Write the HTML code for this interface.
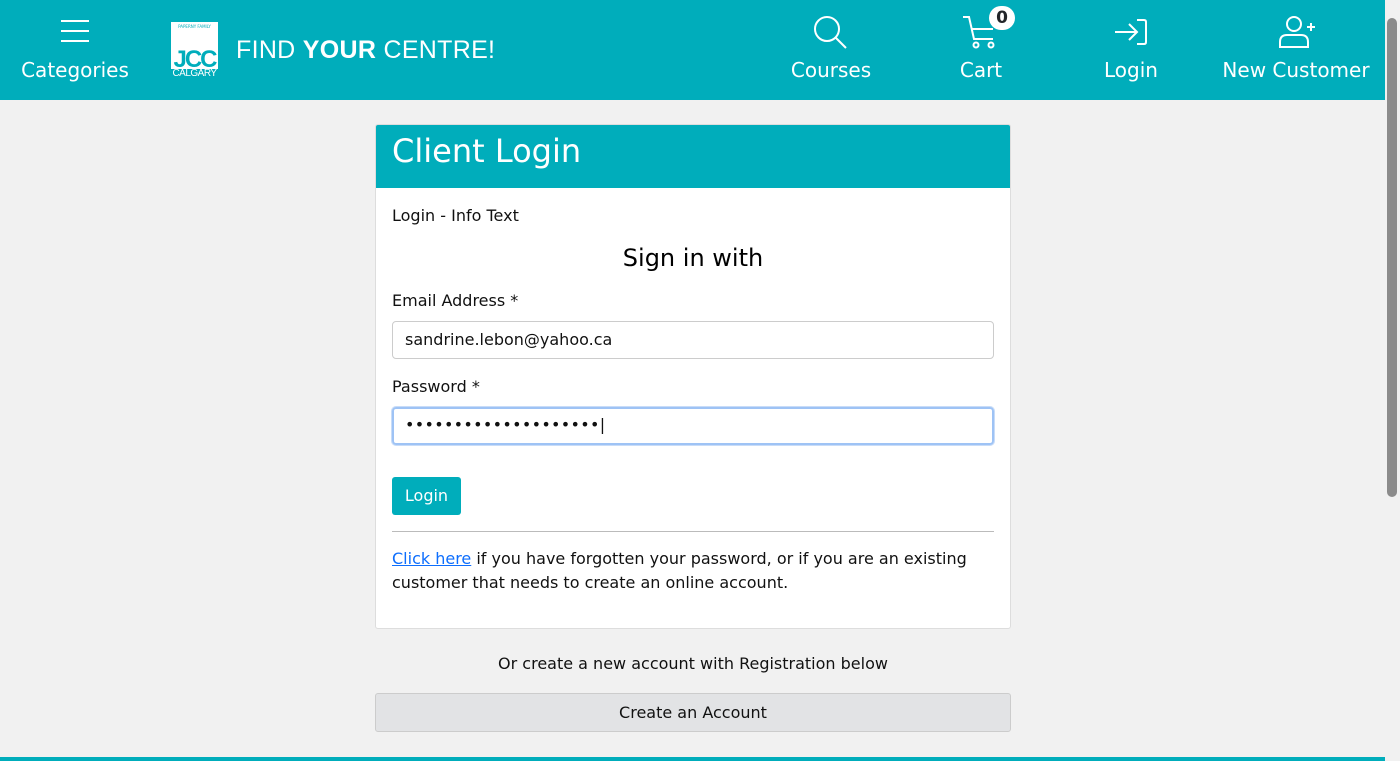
<!DOCTYPE html>
<html><head><style>
*{box-sizing:border-box;margin:0;padding:0}
body{width:1400px;height:761px;overflow:hidden;background:#f1f1f1;font-family:"DejaVu Sans","Liberation Sans",sans-serif;color:#111;position:relative}
.hdr{position:absolute;left:0;top:0;width:1385px;height:100px;background:#00adbb;color:#fff}
.nav{position:absolute;top:0;text-align:center;font-size:20px}
.nav svg{display:block;margin:0 auto}
.nav span{position:absolute;top:58px;left:50%;transform:translateX(-50%);white-space:nowrap}
.sb{position:absolute;right:0;top:0;width:15px;height:761px;background:#f1f1f1}
.thumb{position:absolute;left:2px;top:18px;width:10px;height:479px;background:#8b8b8b;border-radius:5px}
.card{position:absolute;left:375px;top:124px;width:636px;height:505px;background:#fff;border:1px solid #ddd;border-radius:3px;overflow:hidden}
.ch{height:63px;background:#00adbb;color:#fff;font-size:32px;padding:7px 16px}
.body{padding:0 16px;font-size:16px}
.inp{position:absolute;left:16px;width:602px;height:38px;border:1px solid #ccc;border-radius:4px;font-size:16px;padding:8px 12px}
</style></head><body>
<div class="hdr">
 <div class="nav" style="left:20px;width:110px"><svg style="margin-top:20px" width="30" height="22"><path d="M1 1H29M1 11H29M1 21H29" stroke="#fff" stroke-width="2"/></svg><span>Categories</span></div>
 <div style="position:absolute;left:171px;top:22px;width:47px;height:47px;background:#fff"><div style="font-size:4px;color:#00adbb;text-align:center;margin-top:2px;white-space:nowrap">PAPERNY FAMILY</div><div style="position:absolute;bottom:-3px;left:0;width:47px;color:#00adbb;font-size:24px;font-weight:bold;letter-spacing:-2px;text-align:center;line-height:24px;font-family:'Liberation Sans',sans-serif">JCC</div></div>
 <div style="position:absolute;left:171px;top:68px;width:47px;font-size:10px;text-align:center;letter-spacing:-0.5px;font-family:'Liberation Sans',sans-serif">CALGARY</div>
 <div style="position:absolute;left:236px;top:36px;font-size:25px;font-family:'Liberation Sans',sans-serif;letter-spacing:0.3px">FIND <b>YOUR</b> CENTRE!</div>
 <div class="nav" style="left:791px;width:80px"><svg style="margin-top:15px" width="36" height="34"><circle cx="14" cy="14" r="12" fill="none" stroke="#fff" stroke-width="2"/><path d="M23 23L33 33" stroke="#fff" stroke-width="2"/></svg><span>Courses</span></div>
 <div class="nav" style="left:941px;width:80px"><svg style="margin-top:15px" width="40" height="34"><path d="M2 2H8L13 24H32" fill="none" stroke="#fff" stroke-width="2"/><path d="M10 14H32" stroke="#fff" stroke-width="2"/><circle cx="15" cy="30" r="2.5" fill="none" stroke="#fff" stroke-width="2"/><circle cx="30" cy="30" r="2.5" fill="none" stroke="#fff" stroke-width="2"/></svg><span>Cart</span>
  <div style="position:absolute;left:48px;top:6px;width:26px;height:24px;border-radius:12px;background:#fff;color:#212529;font-size:17px;font-weight:bold;line-height:24px">0</div></div>
 <div class="nav" style="left:1091px;width:80px"><svg style="margin-top:18px" width="36" height="30"><path d="M2 14H24M16 6L24 14L16 22" fill="none" stroke="#fff" stroke-width="2"/><path d="M24 2H31Q33 2 33 4V24Q33 26 31 26H24" fill="none" stroke="#fff" stroke-width="2"/></svg><span>Login</span></div>
 <div class="nav" style="left:1236px;width:120px"><svg style="margin-top:15px" width="44" height="34"><circle cx="20" cy="9" r="7" fill="none" stroke="#fff" stroke-width="2"/><path d="M6 32V27Q6 20 13 20H27Q34 20 34 27V32Z" fill="none" stroke="#fff" stroke-width="2"/><path d="M33 12H41M37 8V16" stroke="#fff" stroke-width="2"/></svg><span>New Customer</span></div>
</div>
<div class="card">
 <div class="ch">Client Login</div>
 <div class="body">
  <div style="position:absolute;top:81px;left:16px">Login - Info Text</div>
  <div style="position:absolute;top:119px;left:0;width:634px;text-align:center;font-size:24px;color:#000">Sign in with</div>
  <div style="position:absolute;top:166px;left:16px">Email Address *</div>
  <div class="inp" style="top:196px">sandrine.lebon@yahoo.ca</div>
  <div style="position:absolute;top:252px;left:16px">Password *</div>
  <div class="inp" style="top:282px;border:2px solid #9ec3f5;box-shadow:0 0 0 1px #c8dcf8;padding:6px 11px;letter-spacing:0.3px">••••••••••••••••••••|</div>
  <div style="position:absolute;top:352px;left:16px;width:69px;height:38px;background:#00adbb;color:#fff;border-radius:3px;text-align:center;line-height:38px">Login</div>
  <div style="position:absolute;top:406px;left:16px;width:602px;border-top:1px solid #bbb"></div>
  <div style="position:absolute;top:422px;left:16px;width:602px;line-height:24px"><a style="color:#0d6efd;text-decoration:underline">Click here</a> if you have forgotten your password, or if you are an existing customer that needs to create an online account.</div>
 </div>
</div>
<div style="position:absolute;top:654px;left:375px;width:636px;text-align:center;font-size:16px">Or create a new account with Registration below</div>
<div style="position:absolute;top:693px;left:375px;width:636px;height:39px;background:#e2e3e5;border:1px solid #ccc;border-radius:3px;text-align:center;line-height:37px;font-size:16px">Create an Account</div>
<div style="position:absolute;top:757px;left:0;width:1385px;height:4px;background:#00adbb"></div>
<div class="sb"><div class="thumb"></div></div>
</body></html>
